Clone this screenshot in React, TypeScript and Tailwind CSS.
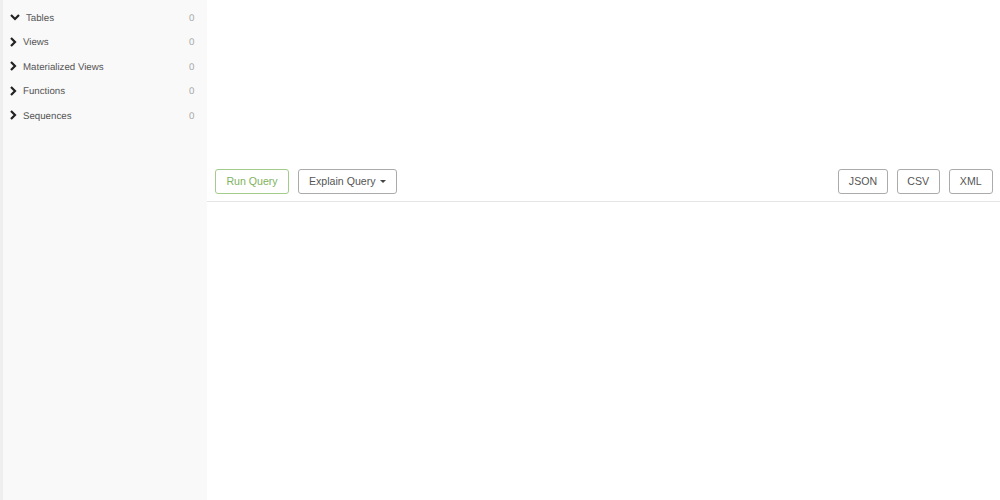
import React from "react";

const Chevron = ({ down }: { down?: boolean }) => (
  <svg width="10" height="10" viewBox="0 0 10 10" className="shrink-0 -mt-[4px]">
    <path
      d={down ? "M1 3 L5 7 L9 3" : "M3 1 L7 5 L3 9"}
      fill="none"
      stroke="#222"
      strokeWidth="2.2"
    />
  </svg>
);

const rows = ["Tables", "Views", "Materialized Views", "Functions", "Sequences"];

const btn =
  "h-[25px] rounded-[3px] border bg-white text-[10.6px] leading-none flex items-center justify-center";

export default function App() {
  return (
    <div className="w-[1000px] h-[500px] flex bg-white overflow-hidden font-['Liberation_Sans',Arial,sans-serif] [text-rendering:geometricPrecision]">
      <aside className="w-[207px] h-full shrink-0 bg-[#f9f9f9] border-l-[3px] border-[#eeeeee] pt-[7px]">
        {rows.map((r, i) => (
          <div key={r} className="h-[24.5px] flex items-center pl-[5px] pr-[12.5px] text-[9.7px] text-[#555]">
            <span className={i === 0 ? "flex items-center w-[18px] pl-[2px]" : "flex items-center w-[15px]"}>
              <Chevron down={i === 0} />
            </span>
            <span className="flex-1">{r}</span>
            <span className="text-[#aaa]">0</span>
          </div>
        ))}
      </aside>
      <main className="flex-1 flex flex-col">
        <div className="h-[202px] shrink-0 border-b border-[#e5e5e5] flex items-start pt-[169px] pl-[8px] pr-[7px]">
          <button className={`${btn} w-[74px] border-[#a3cc8c] text-[#7fb25e] mr-[8.5px]`}>Run Query</button>
          <button className={`${btn} w-[99.5px] border-[#ababab] text-[#555]`}>
            Explain Query
            <span className="ml-[4px] w-0 h-0 border-x-[3.5px] border-x-transparent border-t-[3.5px] border-t-[#444]" />
          </button>
          <div className="ml-auto flex gap-[8.5px]">
            <button className={`${btn} w-[50px] border-[#ababab] text-[#555]`}>JSON</button>
            <button className={`${btn} w-[43.5px] border-[#ababab] text-[#555]`}>CSV</button>
            <button className={`${btn} w-[44.5px] border-[#ababab] text-[#555]`}>XML</button>
          </div>
        </div>
      </main>
    </div>
  );
}
